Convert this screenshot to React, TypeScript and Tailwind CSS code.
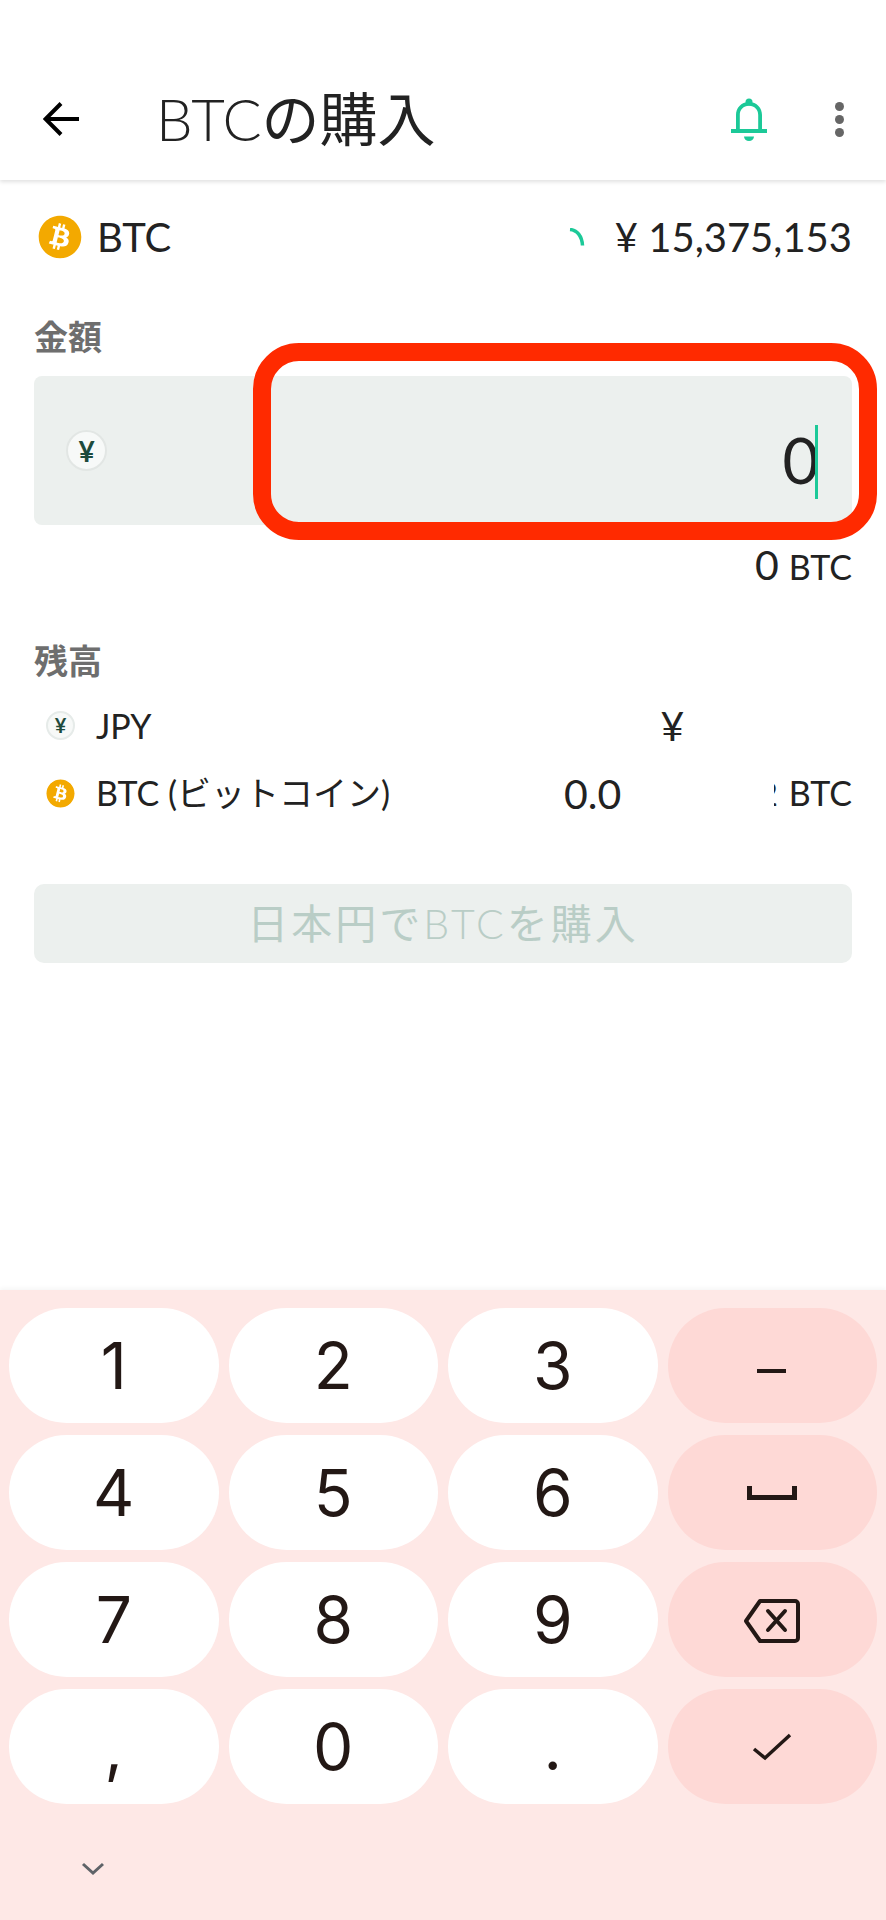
import React from "react";
import { FaBitcoin } from "react-icons/fa";

const jp = { fontFamily: 'Lato, "Noto Sans CJK JP", sans-serif' };

function Yen({ big }: { big?: boolean }) {
  return (
    <div className={big ? "w-[41px] h-[41px] rounded-full bg-[#f7f9f8] border-2 border-[#e2e6e4] flex items-center justify-center text-[28px] font-bold text-[#1d4a3c]" : "w-[29px] h-[29px] rounded-full bg-[#f7f9f8] border-2 border-[#e6ebe9] flex items-center justify-center text-[20px] font-bold text-[#1d4a3c]"}>
      ¥
    </div>
  );
}

function Key({ children, side }: { children: React.ReactNode; side?: boolean }) {
  return (
    <div className={`h-[115px] rounded-full flex items-center justify-center text-[64px] text-[#231815] ${side ? "bg-[#fed9d6]" : "bg-white"}`} style={{ fontFamily: "Inter, sans-serif" }}>
      {children}
    </div>
  );
}

const ink = "#231815";

export default function App() {
  return (
    <div className="relative w-[886px] h-[1920px] bg-white overflow-hidden text-[#222222]" style={jp}>
      {/* app bar */}
      <header className="h-[180px] pt-[58px] pl-[43px] pr-[42px] flex items-center bg-white shadow-[0_2px_4px_rgba(0,0,0,0.12)]">
        <svg width="36" height="34" viewBox="0 0 36 34" fill="none" stroke="#000" strokeWidth="4">
          <path d="M36 17H3" />
          <path d="M18 1.500 2.500 17 18 32.500" />
        </svg>
        <h1 className="ml-[77px] text-[58px] font-normal leading-none whitespace-nowrap">
          <span className="font-light">BTC</span>の購入
        </h1>
        <div className="ml-auto flex items-center">
          <svg width="36" height="43" viewBox="0 0 36 43" fill="#1cc998">
            <circle cx="18" cy="4" r="3.500" />
            <path d="M18 4C10 4 5 10 5 17v14H0v4h36v-4h-5V17C31 10 26 4 18 4zm0 3.800c5.600 0 9.200 4 9.200 9.200v14H8.800V17c0-5.200 3.600-9.200 9.200-9.200z" />
            <path d="M13 38.500h10a5 4.500 0 0 1-10 0z" />
          </svg>
          <div className="ml-[68px] flex flex-col gap-[4px]">
            <span className="w-[9px] h-[9px] rounded-full bg-[#666666]" />
            <span className="w-[9px] h-[9px] rounded-full bg-[#666666]" />
            <span className="w-[9px] h-[9px] rounded-full bg-[#666666]" />
          </div>
        </div>
      </header>

      <main className="px-[34px]">
        {/* price row */}
        <div className="mt-[35px] h-[44px] flex items-center pl-[4px]">
          <FaBitcoin className="text-[#f3a900] bg-white rounded-full" size={44} />
          <span className="ml-[15px] text-[40px] leading-none">BTC</span>
          <svg className="ml-auto mr-[30px]" width="16" height="18" viewBox="0 0 16 18" fill="none" stroke="#1cc998" strokeWidth="3.500">
            <path d="M1 1.500C8 2 13 8 13.500 17.500" />
          </svg>
          <span className="text-[40px] leading-none">¥ 15,375,153</span>
        </div>

        {/* amount */}
        <div className="mt-[54px] text-[34px] leading-[48px] font-bold text-[#6e6e6e]">金額</div>
        <div className="mt-[15px] h-[149px] rounded-[8px] bg-[#ecf0ee] flex items-center pl-[32px] pr-[34px]">
          <Yen big />
          <span className="ml-auto text-[63px] leading-none mt-[18px]">0</span>
          <span className="w-[3px] h-[74px] bg-[#1cc998] mt-[23px] ml-[-4px]" />
        </div>
        <div className="mt-[18px] flex justify-end items-baseline">
          <span className="text-[41px] leading-[44px]">0</span>
          <span className="ml-[10px] text-[34px] leading-[44px]">BTC</span>
        </div>

        {/* balance */}
        <div className="mt-[48px] text-[34px] leading-[48px] font-bold text-[#6e6e6e]">残高</div>
        <div className="mt-[20px] h-[40px] flex items-center pl-[12px]">
          <Yen />
          <span className="ml-[21px] text-[34px]">JPY</span>
          <span className="ml-[509px] text-[41px] leading-none">¥</span>
        </div>
        <div className="mt-[28px] h-[40px] flex items-center pl-[12px]">
          <FaBitcoin className="text-[#f3a900] bg-white rounded-full" size={29} />
          <span className="ml-[21px] text-[34px] leading-none whitespace-nowrap">BTC (ビットコイン)</span>
          <span className="ml-[174px] text-[41px] leading-none">0.0</span>
          <span className="ml-auto w-[4px] h-[27px] overflow-hidden flex justify-end text-[33px] leading-[27px]">2</span>
          <span className="ml-[11px] text-[34px] leading-none">BTC</span>
        </div>

        {/* button */}
        <div className="mt-[71px] h-[79px] rounded-[10px] bg-[#ecf0ee] flex items-center justify-center text-[41px] tracking-[3px] text-[#b9cdc6]">
          <span>日本円で<span className="font-light">BTC</span>を購入</span>
        </div>
      </main>

      {/* keyboard */}
      <section className="absolute left-0 right-0 bottom-0 h-[630px] bg-[#fee8e6] pt-[18px] px-[9px] shadow-[0_-2px_4px_rgba(0,0,0,0.04)]">
        <div className="grid grid-cols-4 gap-x-[10px] gap-y-[12px]">
          <Key>1</Key>
          <Key>2</Key>
          <Key>3</Key>
          <Key side>
            <svg className="mt-[10px]" width="30" height="6" viewBox="0 0 30 6"><rect y="1" width="29" height="4" fill={ink} /></svg>
          </Key>
          <Key>4</Key>
          <Key>5</Key>
          <Key>6</Key>
          <Key side>
            <svg width="50" height="14" viewBox="0 0 50 14" fill="none" stroke={ink} strokeWidth="5"><path d="M2.500 0v11.500h45V0" /></svg>
          </Key>
          <Key>7</Key>
          <Key>8</Key>
          <Key>9</Key>
          <Key side>
            <svg className="mt-[3px]" width="56" height="44" viewBox="0 0 56 44" fill="none" stroke={ink} strokeWidth="4" strokeLinejoin="round">
              <path d="M16 2h35a3 3 0 0 1 3 3v34a3 3 0 0 1-3 3H16L2 22z" />
              <path d="M24 12 41 31M41 12 24 31" strokeLinecap="round" />
            </svg>
          </Key>
          <Key><span className="mt-[2px]">,</span></Key>
          <Key>0</Key>
          <Key><span className="mt-0">.</span></Key>
          <Key side>
            <svg width="40" height="30" viewBox="0 0 40 30" fill="none" stroke={ink} strokeWidth="3.500"><path d="M2 17l11 9L38 3" /></svg>
          </Key>
        </div>
        <div className="mt-[58px] ml-[72px]">
          <svg width="24" height="14" viewBox="0 0 24 14" fill="none" stroke="#5f6368" strokeWidth="3"><path d="M2 2l10 9 10-9" /></svg>
        </div>
      </section>

      {/* red annotation */}
      <div className="absolute left-[253px] top-[343px] w-[624px] h-[197px] rounded-[46px] border-[18px] border-[#ff2a00]" />
    </div>
  );
}
